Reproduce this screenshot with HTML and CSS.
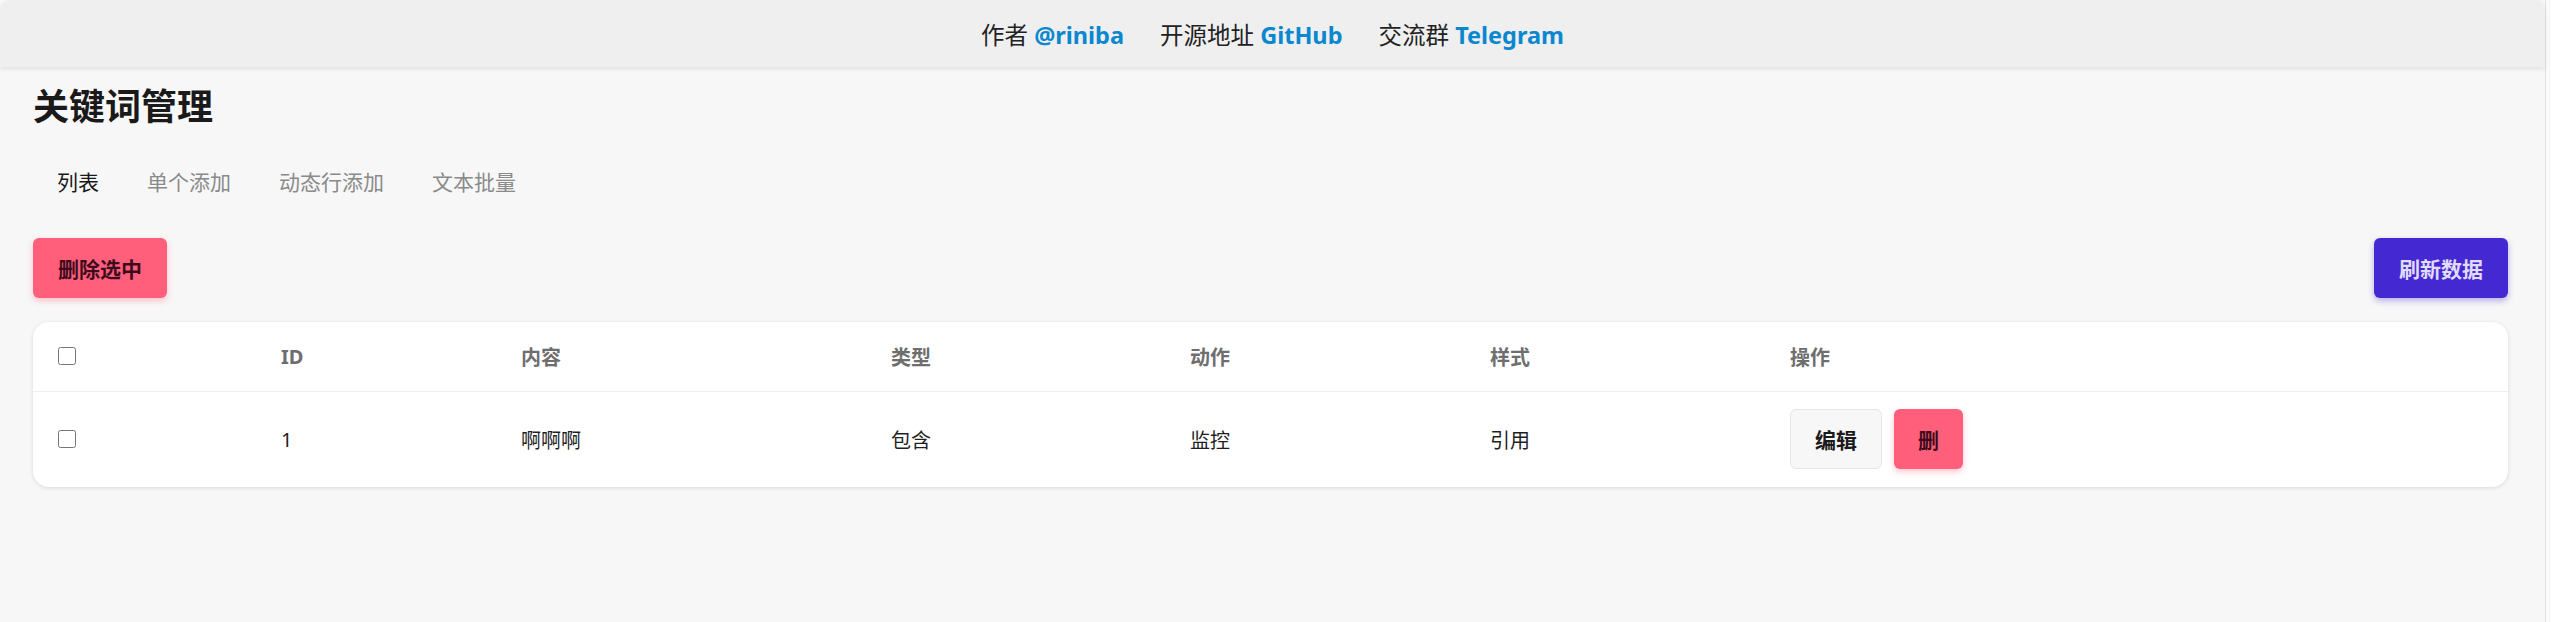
FILE: index.html
```html
<!DOCTYPE html>
<html lang="zh-CN">
<head>
<meta charset="utf-8">
<title>关键词管理</title>
<link rel="stylesheet" href="styles.css">
</head>
<body>
<div class="app">
  <header class="topbar">
    <span class="group">作者 <a class="link">@riniba</a></span>
    <span class="group">开源地址 <a class="link">GitHub</a></span>
    <span class="group">交流群 <a class="link">Telegram</a></span>
  </header>
  <main class="main">
    <h1 class="title">关键词管理</h1>
    <nav class="tabs">
      <span class="tab active">列表</span>
      <span class="tab">单个添加</span>
      <span class="tab">动态行添加</span>
      <span class="tab">文本批量</span>
    </nav>
    <div class="toolbar">
      <button class="btn btn-danger">删除选中</button>
      <button class="btn btn-primary">刷新数据</button>
    </div>
    <div class="card">
      <table class="table">
        <colgroup>
          <col class="c-check">
          <col class="c-id">
          <col class="c-content">
          <col class="c-type">
          <col class="c-action">
          <col class="c-style">
          <col>
        </colgroup>
        <thead>
          <tr>
            <th><input type="checkbox" class="check"></th>
            <th>ID</th>
            <th>内容</th>
            <th>类型</th>
            <th>动作</th>
            <th>样式</th>
            <th>操作</th>
          </tr>
        </thead>
        <tbody>
          <tr>
            <td><input type="checkbox" class="check"></td>
            <td>1</td>
            <td>啊啊啊</td>
            <td>包含</td>
            <td>监控</td>
            <td>引用</td>
            <td>
              <div class="ops">
                <button class="btn btn-light">编辑</button>
                <button class="btn btn-danger">删</button>
              </div>
            </td>
          </tr>
        </tbody>
      </table>
    </div>
  </main>
</div>
</body>
</html>
```
FILE: styles.css
```css
* { box-sizing: border-box; }
html, body { margin: 0; padding: 0; }
body {
  background: #fafafa;
  font-family: "Noto Sans", "Noto Sans CJK SC", sans-serif;
  color: #1b1b1b;
}
.app {
  width: 2546px;
  min-height: 100vh;
  background: #f7f7f7;
  border-right: 1px solid #e3e3e3;
}
.topbar {
  height: 67px;
  background: #efefef;
  border-radius: 10px 10px 0 0;
  box-shadow: 0 2px 4px rgba(0, 0, 0, 0.09);
  display: flex;
  align-items: center;
  justify-content: center;
  gap: 36px;
  font-size: 23.5px;
  color: #222;
  position: relative;
  z-index: 1;
}
.link {
  color: #0a87cf;
  font-weight: 700;
}
.main {
  padding: 0 37px 0 33px;
}
.title {
  margin: 16px 0 0;
  font-size: 36px;
  line-height: 48px;
  font-weight: 700;
  color: #1a1a1a;
}
.tabs {
  display: flex;
  margin-top: 24px;
}
.tab {
  padding: 12px 24px;
  font-size: 21px;
  line-height: 31px;
  color: #8a8a8a;
}
.tab.active { color: #1a1a1a; }
.toolbar {
  display: flex;
  justify-content: space-between;
  margin-top: 28px;
}
.btn {
  height: 60px;
  padding: 0 25px;
  border: 0;
  border-radius: 6px;
  font-family: inherit;
  font-size: 21px;
  font-weight: 700;
  cursor: pointer;
}
.btn-danger {
  background: #ff5f7b;
  color: #3e0b1c;
  box-shadow: 0 3px 6px rgba(255, 95, 123, 0.35);
}
.btn-primary {
  background: #4429d2;
  color: #e0dbff;
  box-shadow: 0 3px 6px rgba(68, 41, 210, 0.35);
}
.btn-light {
  background: #f7f7f7;
  color: #1a1a1a;
  border: 1px solid #e6e6e6;
  padding: 0 24px;
}
.ops .btn-danger { padding: 0 24px; }
.card {
  margin-top: 24px;
  background: #fff;
  border-radius: 16px;
  box-shadow: 0 1px 4px rgba(0, 0, 0, 0.12);
  overflow: hidden;
}
.table {
  width: 100%;
  border-collapse: collapse;
  table-layout: fixed;
}
.c-check { width: 223px; }
.c-id { width: 240px; }
.c-content { width: 370px; }
.c-type { width: 299px; }
.c-action { width: 300px; }
.c-style { width: 300px; }
.table th, .table td {
  text-align: left;
  padding: 0 25px;
  font-size: 20px;
  vertical-align: middle;
}
.table th {
  height: 69px;
  color: #6e6e6e;
  font-weight: 700;
  border-bottom: 1px solid #efefef;
}
.table td {
  height: 96px;
  color: #1f1f1f;
}
.check {
  width: 18px;
  height: 18px;
  margin: 0;
  display: block;
}
.ops {
  display: flex;
  gap: 12px;
}
```
